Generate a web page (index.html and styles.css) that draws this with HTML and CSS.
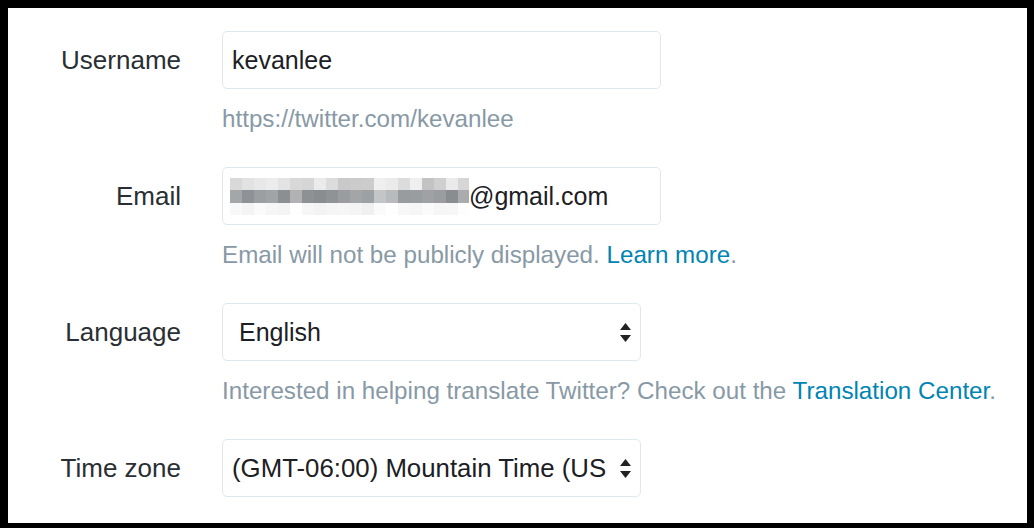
FILE: index.html
```html
<!DOCTYPE html>
<html lang="en">
<head>
<meta charset="utf-8">
<title>Account settings</title>
<link rel="stylesheet" href="styles.css">
</head>
<body>
<div class="frame">
  <form class="settings">
    <div class="row">
      <label class="label">Username</label>
      <div class="field">
        <div class="control input">kevanlee</div>
        <p class="help">https://twitter.com/kevanlee</p>
      </div>
    </div>
    <div class="row">
      <label class="label">Email</label>
      <div class="field">
        <div class="control input email">
          <span class="pixelated" aria-hidden="true">
            <span class="px px-top"></span>
            <span class="px px-mid"></span>
            <span class="px px-bot"></span>
          </span><span>@gmail.com</span>
        </div>
        <p class="help">Email will not be publicly displayed. <a href="#">Learn more</a>.</p>
      </div>
    </div>
    <div class="row">
      <label class="label">Language</label>
      <div class="field">
        <div class="control select select-lang">
          <span class="select-text">English</span>
          <svg class="arrows" width="11" height="19" viewBox="0 0 11 19"><polygon points="0,7 5.5,0 11,7"/><polygon points="0,12 11,12 5.5,19"/></svg>
        </div>
        <p class="help">Interested in helping translate Twitter? Check out the <a href="#">Translation Center</a>.</p>
      </div>
    </div>
    <div class="row">
      <label class="label">Time zone</label>
      <div class="field">
        <div class="control select select-tz">
          <span class="select-text">(GMT-06:00) Mountain Time (US</span>
          <svg class="arrows" width="11" height="19" viewBox="0 0 11 19"><polygon points="0,7 5.5,0 11,7"/><polygon points="0,12 11,12 5.5,19"/></svg>
        </div>
      </div>
    </div>
  </form>
</div>
</body>
</html>
```

FILE: styles.css
```css
* { box-sizing: border-box; }

html, body {
  margin: 0;
  padding: 0;
  background: #000;
}

body {
  width: 1034px;
  height: 528px;
  font-family: "Liberation Sans", Arial, sans-serif;
  font-size: 25px;
  color: #292f33;
}

.frame {
  width: 1034px;
  height: 528px;
  border-style: solid;
  border-color: #000;
  border-width: 8px 7px 5px 8px;
  background: #fff;
  overflow: hidden;
}

.settings {
  padding-top: 23px;
  display: flex;
  flex-direction: column;
  gap: 34px;
}

.row {
  display: grid;
  grid-template-columns: 173px 1fr;
  column-gap: 41px;
  align-items: start;
}

.label {
  height: 58px;
  display: flex;
  align-items: center;
  justify-content: flex-end;
  color: #292f33;
  font-size: 26px;
}

.field {
  display: flex;
  flex-direction: column;
}

.control {
  height: 58px;
  border: 1px solid #e1e8ed;
  border-radius: 5px;
  display: flex;
  align-items: center;
  background: #fff;
  color: #1c2024;
  white-space: nowrap;
}

.input {
  width: 439px;
  padding-left: 9px;
}

.email {
  padding-left: 7px;
}

.pixelated {
  display: flex;
  flex-direction: column;
  width: 239px;
  height: 37px;
  margin-top: 1px;
}

.px {
  display: block;
  flex: 1;
}

.px-top {
  background: linear-gradient(to right,
    #d9d9d9 0 12px, #e2e2e2 12px 24px, #e8e8e8 24px 36px, #ececec 36px 48px,
    #e3e3e3 48px 60px, #d8d8d8 60px 72px, #d6d6d6 72px 84px, #ebebeb 84px 96px,
    #dcdcdc 96px 108px, #c9c9c9 108px 120px, #cbcbcb 120px 132px, #cccccc 132px 144px,
    #efefef 144px 156px, #ebebeb 156px 168px, #dcdcdc 168px 180px, #efefef 180px 192px,
    #c3c3c3 192px 204px, #cfcfcf 204px 216px, #eaeaea 216px 228px, #d6d6d6 228px 240px);
}

.px-mid {
  background: linear-gradient(to right,
    #a4a7a9 0 12px, #8e9195 12px 24px, #9c9fa1 24px 36px, #a1a4a6 36px 48px,
    #8c8f92 48px 60px, #b0b2b3 60px 72px, #8e9194 72px 84px, #8a8d90 84px 96px,
    #909396 96px 108px, #9a9c9f 108px 120px, #a3a5a7 120px 132px, #9ea1a3 132px 144px,
    #c4c5c6 144px 156px, #b8babb 156px 168px, #999c9f 168px 180px, #9a9da0 180px 192px,
    #9fa1a4 192px 204px, #9a9c9f 204px 216px, #8a8d90 216px 228px, #a9abad 228px 240px);
}

.px-bot {
  background: linear-gradient(to right,
    #f8f8f8 0 12px, #f4f4f4 12px 24px, #fafafa 24px 36px, #f6f6f6 36px 48px,
    #f4f4f4 48px 60px, #fefefe 60px 72px, #f6f6f6 72px 84px, #f3f3f3 84px 96px,
    #f5f5f5 96px 108px, #f6f6f6 108px 120px, #f4f4f4 120px 132px, #f0f0f0 132px 144px,
    #fafafa 144px 156px, #fefefe 156px 168px, #f8f8f8 168px 180px, #f6f6f6 180px 192px,
    #fafafa 192px 204px, #f6f6f6 204px 216px, #f7f7f7 216px 228px, #fdfdfd 228px 240px);
}

.select {
  width: 419px;
  padding-right: 9px;
  gap: 8px;
}

.select-lang {
  padding-left: 16px;
}

.select-tz {
  padding-left: 9px;
  font-size: 25.8px;
}

.select-text {
  flex: 1;
  overflow: hidden;
  white-space: nowrap;
}

.arrows {
  flex: none;
  fill: #222;
}

.help {
  margin: 15px 0 0;
  font-size: 24.2px;
  line-height: 29px;
  color: #8899a6;
  white-space: nowrap;
}

.help a {
  color: #0084b4;
  text-decoration: none;
}
```
